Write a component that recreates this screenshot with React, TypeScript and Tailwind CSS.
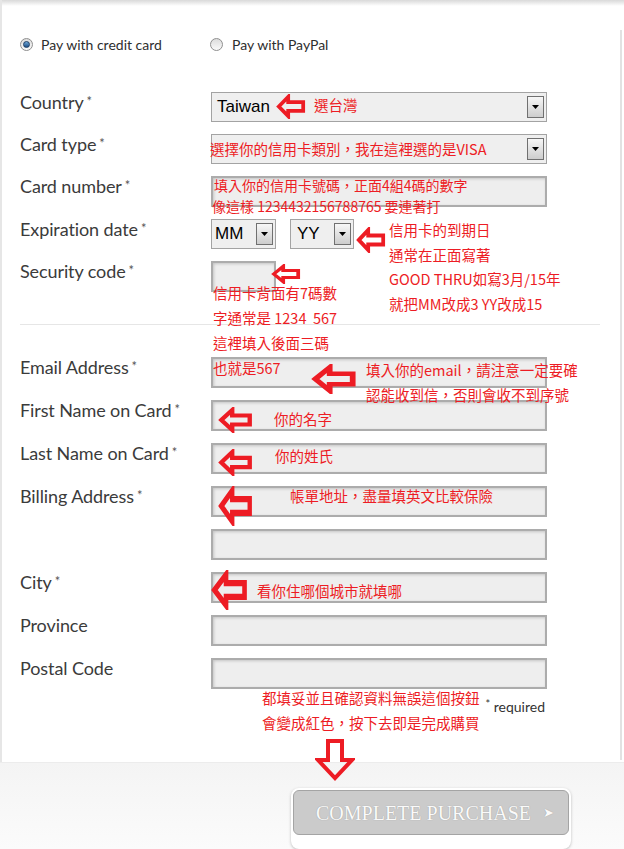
import React from "react";

const red = "text-[#ed1c24]";

const LeftArrow = ({ className }: { className: string }) => (
  <svg viewBox="0 0 32 26" preserveAspectRatio="none" className={`absolute ${className}`}>
    <polygon
      points="3,13 13,3 13,8.5 29,8.5 29,17.5 13,17.5 13,23"
      fill="none"
      stroke="#ed1c24"
      strokeWidth="4"
      strokeLinejoin="miter"
    />
  </svg>
);

const DownArrow = () => (
  <svg viewBox="0 0 40 42" className="absolute left-[315px] top-[739px] w-[40px] h-[42px]">
    <polygon
      points="13,2 27,2 27,21 37,21 20,39 3,21 13,21"
      fill="none"
      stroke="#ed1c24"
      strokeWidth="4"
    />
  </svg>
);

const Caret = () => (
  <span className="absolute right-[2px] top-[3px] w-[17px] h-[22px] border border-[#707070] bg-gradient-to-b from-[#f7f7f7] to-[#cdcdcd] flex items-center justify-center">
    <svg viewBox="0 0 7 4" className="w-[7px] h-[4px]">
      <polygon points="0,0 7,0 3.5,4" fill="#000" />
    </svg>
  </span>
);

const Select = ({ value, className }: { value: string; className: string }) => (
  <div className={`relative flex items-center h-[30px] border border-[#a3a3a3] bg-[#efefef] ${className}`}>
    <span className="font-['Liberation_Sans',sans-serif] text-[17px] text-black">{value}</span>
    <Caret />
  </div>
);

const Input = ({ className = "w-[336px]" }: { className?: string }) => (
  <div className={`h-[31px] border-2 border-[#acacac] bg-[#eeeeee] shadow-[inset_1px_1px_3px_rgba(0,0,0,0.18)] ${className}`} />
);

const Label = ({ text, req = false }: { text: string; req?: boolean }) => (
  <div className="w-[191px] shrink-0 -mt-[1px] text-[18px] leading-[22px] text-[#3b3b3b] tracking-[-0.1px]">
    {text}
    {req && <span className="ml-[3px] text-[13px] align-top relative top-[-1px] text-[#555]">*</span>}
  </div>
);

const Row = ({ label, req, children }: { label: string; req?: boolean; children: React.ReactNode }) => (
  <div className="flex items-start">
    <Label text={label} req={req} />
    {children}
  </div>
);

const Radio = ({ on }: { on: boolean }) => (
  <span className="w-[13px] h-[13px] rounded-full border border-[#8f8f8f] bg-gradient-to-b from-[#dcdcdc] to-[#fafafa] flex items-center justify-center">
    {on && <span className="w-[7px] h-[7px] rounded-full bg-gradient-to-b from-[#6fa8d8] to-[#1c4f86] border border-[#1a3d66]" />}
  </span>
);

const Note = ({ className, children }: { className: string; children: React.ReactNode }) => (
  <span className={`absolute whitespace-nowrap text-[14.5px] leading-[18px] ${red} ${className}`}>{children}</span>
);

export default function App() {
  return (
    <div className="relative w-[624px] h-[849px] overflow-hidden bg-white font-['Lato',sans-serif]">
      {/* torn paper edges */}
      <div className="absolute left-0 top-0 w-full h-[6px] bg-gradient-to-b from-[#d9d9d9] to-white" />
      <div className="absolute left-0 top-0 w-[2px] h-full bg-[#e6e6e6]" />
      <div className="absolute right-[2px] top-[30px] w-[2px] h-[730px] bg-[#e2e2e2]" />

      <div className="pl-[20px]">
        <div className="flex items-center pt-[37px] h-[51px] text-[14px] text-[#2e2e2e]">
          <div className="flex items-center gap-[8px] w-[190px]">
            <Radio on />
            <span>Pay with credit card</span>
          </div>
          <div className="flex items-center gap-[9px]">
            <Radio on={false} />
            <span>Pay with PayPal</span>
          </div>
        </div>

        <div className="mt-[41px] flex flex-col gap-[12px]">
          <Row label="Country" req>
            <Select value="Taiwan" className="w-[336px] pl-[5px]" />
          </Row>
          <Row label="Card type" req>
            <Select value="" className="w-[336px]" />
          </Row>
          <Row label="Card number" req>
            <Input />
          </Row>
          <Row label="Expiration date" req>
            <div className="flex gap-[14px]">
              <Select value="MM" className="w-[65px] pl-[3px]" />
              <Select value="YY" className="w-[64px] pl-[6px]" />
            </div>
          </Row>
          <Row label="Security code" req>
            <Input className="w-[65px]" />
          </Row>
        </div>

        <div className="mt-[32px] w-[580px] h-px bg-[#e6e6e6]" />

        <div className="mt-[32px] flex flex-col gap-[12px]">
          <Row label="Email Address" req>
            <Input />
          </Row>
          <Row label="First Name on Card" req>
            <Input />
          </Row>
          <Row label="Last Name on Card" req>
            <Input />
          </Row>
          <Row label="Billing Address" req>
            <Input />
          </Row>
          <Row label="">
            <Input />
          </Row>
          <Row label="City" req>
            <Input />
          </Row>
          <Row label="Province">
            <Input />
          </Row>
          <Row label="Postal Code">
            <Input />
          </Row>
        </div>

        <div className="w-[525px] mt-[7px] text-right text-[14px] text-[#333]">
          <span className="text-[11px] align-top">*</span> required
        </div>
      </div>

      {/* footer band */}
      <div className="absolute left-0 top-[762px] w-full h-[87px] border-t border-[#ececec] bg-gradient-to-b from-[#f4f4f4] to-[#fbfbfb] flex justify-end pt-[25px] pr-[53px]">
        <div className="rounded-[8px] p-[2px] bg-white shadow-[0_1px_3px_rgba(0,0,0,0.25)]">
          <div className="w-[276px] h-[45px] rounded-[6px] border border-[#a4a4a4] bg-[#cbcbcb] flex items-center justify-center gap-[12px] pl-[8px] font-['Liberation_Serif',serif] text-[20px] text-[#fafafa] [text-shadow:0_0_1px_rgba(0,0,0,0.3)]">
            <span>COMPLETE PURCHASE</span>
            <span className="text-[13px]">➤</span>
          </div>
        </div>
      </div>

      {/* annotations */}
      <div className="font-['Noto_Sans_CJK_TC','Noto_Sans_CJK_SC',sans-serif]">
        <LeftArrow className="left-[276px] top-[94px] w-[30px] h-[25px]" />
        <Note className="left-[314px] top-[96px]">選台灣</Note>

        <Note className="left-[210px] top-[140px]">選擇你的信用卡類別，我在這裡選的是VISA</Note>

        <Note className="left-[214px] top-[176px] text-[14px]">填入你的信用卡號碼，正面4組4碼的數字</Note>
        <Note className="left-[212px] top-[197px] text-[14px]">像這樣 1234432156788765 要連著打</Note>

        <LeftArrow className="left-[356px] top-[227px] w-[30px] h-[26px]" />
        <div className={`absolute left-[389px] top-[218px] text-[14.5px] leading-[24.7px] whitespace-nowrap ${red}`}>
          <div>信用卡的到期日</div>
          <div>通常在正面寫著</div>
          <div>GOOD THRU如寫3月/15年</div>
          <div>就把MM改成3 YY改成15</div>
        </div>

        <LeftArrow className="left-[271px] top-[264px] w-[30px] h-[20px]" />
        <div className={`absolute left-[213px] top-[280px] text-[14.5px] leading-[25px] whitespace-nowrap ${red}`}>
          <div>信用卡背面有7碼數</div>
          <div>字通常是 1234&nbsp;&nbsp;567</div>
          <div>這裡填入後面三碼</div>
          <div>也就是567</div>
        </div>

        <LeftArrow className="left-[311px] top-[364px] w-[46px] h-[30px]" />
        <div className={`absolute left-[366px] top-[357px] text-[14.5px] leading-[25px] whitespace-nowrap ${red}`}>
          <div>填入你的email，請注意一定要確</div>
          <div>認能收到信，否則會收不到序號</div>
        </div>

        <LeftArrow className="left-[218px] top-[407px] w-[35px] h-[26px]" />
        <Note className="left-[274px] top-[410px]">你的名字</Note>

        <LeftArrow className="left-[218px] top-[449px] w-[35px] h-[27px]" />
        <Note className="left-[275px] top-[447px]">你的姓氏</Note>

        <LeftArrow className="left-[218px] top-[486px] w-[35px] h-[40px]" />
        <Note className="left-[290px] top-[487px]">帳單地址，盡量填英文比較保險</Note>

        <LeftArrow className="left-[211px] top-[570px] w-[37px] h-[40px]" />
        <Note className="left-[257px] top-[582px]">看你住哪個城市就填哪</Note>

        <div className={`absolute left-[262px] top-[685px] text-[14.5px] leading-[25px] whitespace-nowrap ${red}`}>
          <div>都填妥並且確認資料無誤這個按鈕</div>
          <div>會變成紅色，按下去即是完成購買</div>
        </div>

        <DownArrow />
      </div>
    </div>
  );
}
